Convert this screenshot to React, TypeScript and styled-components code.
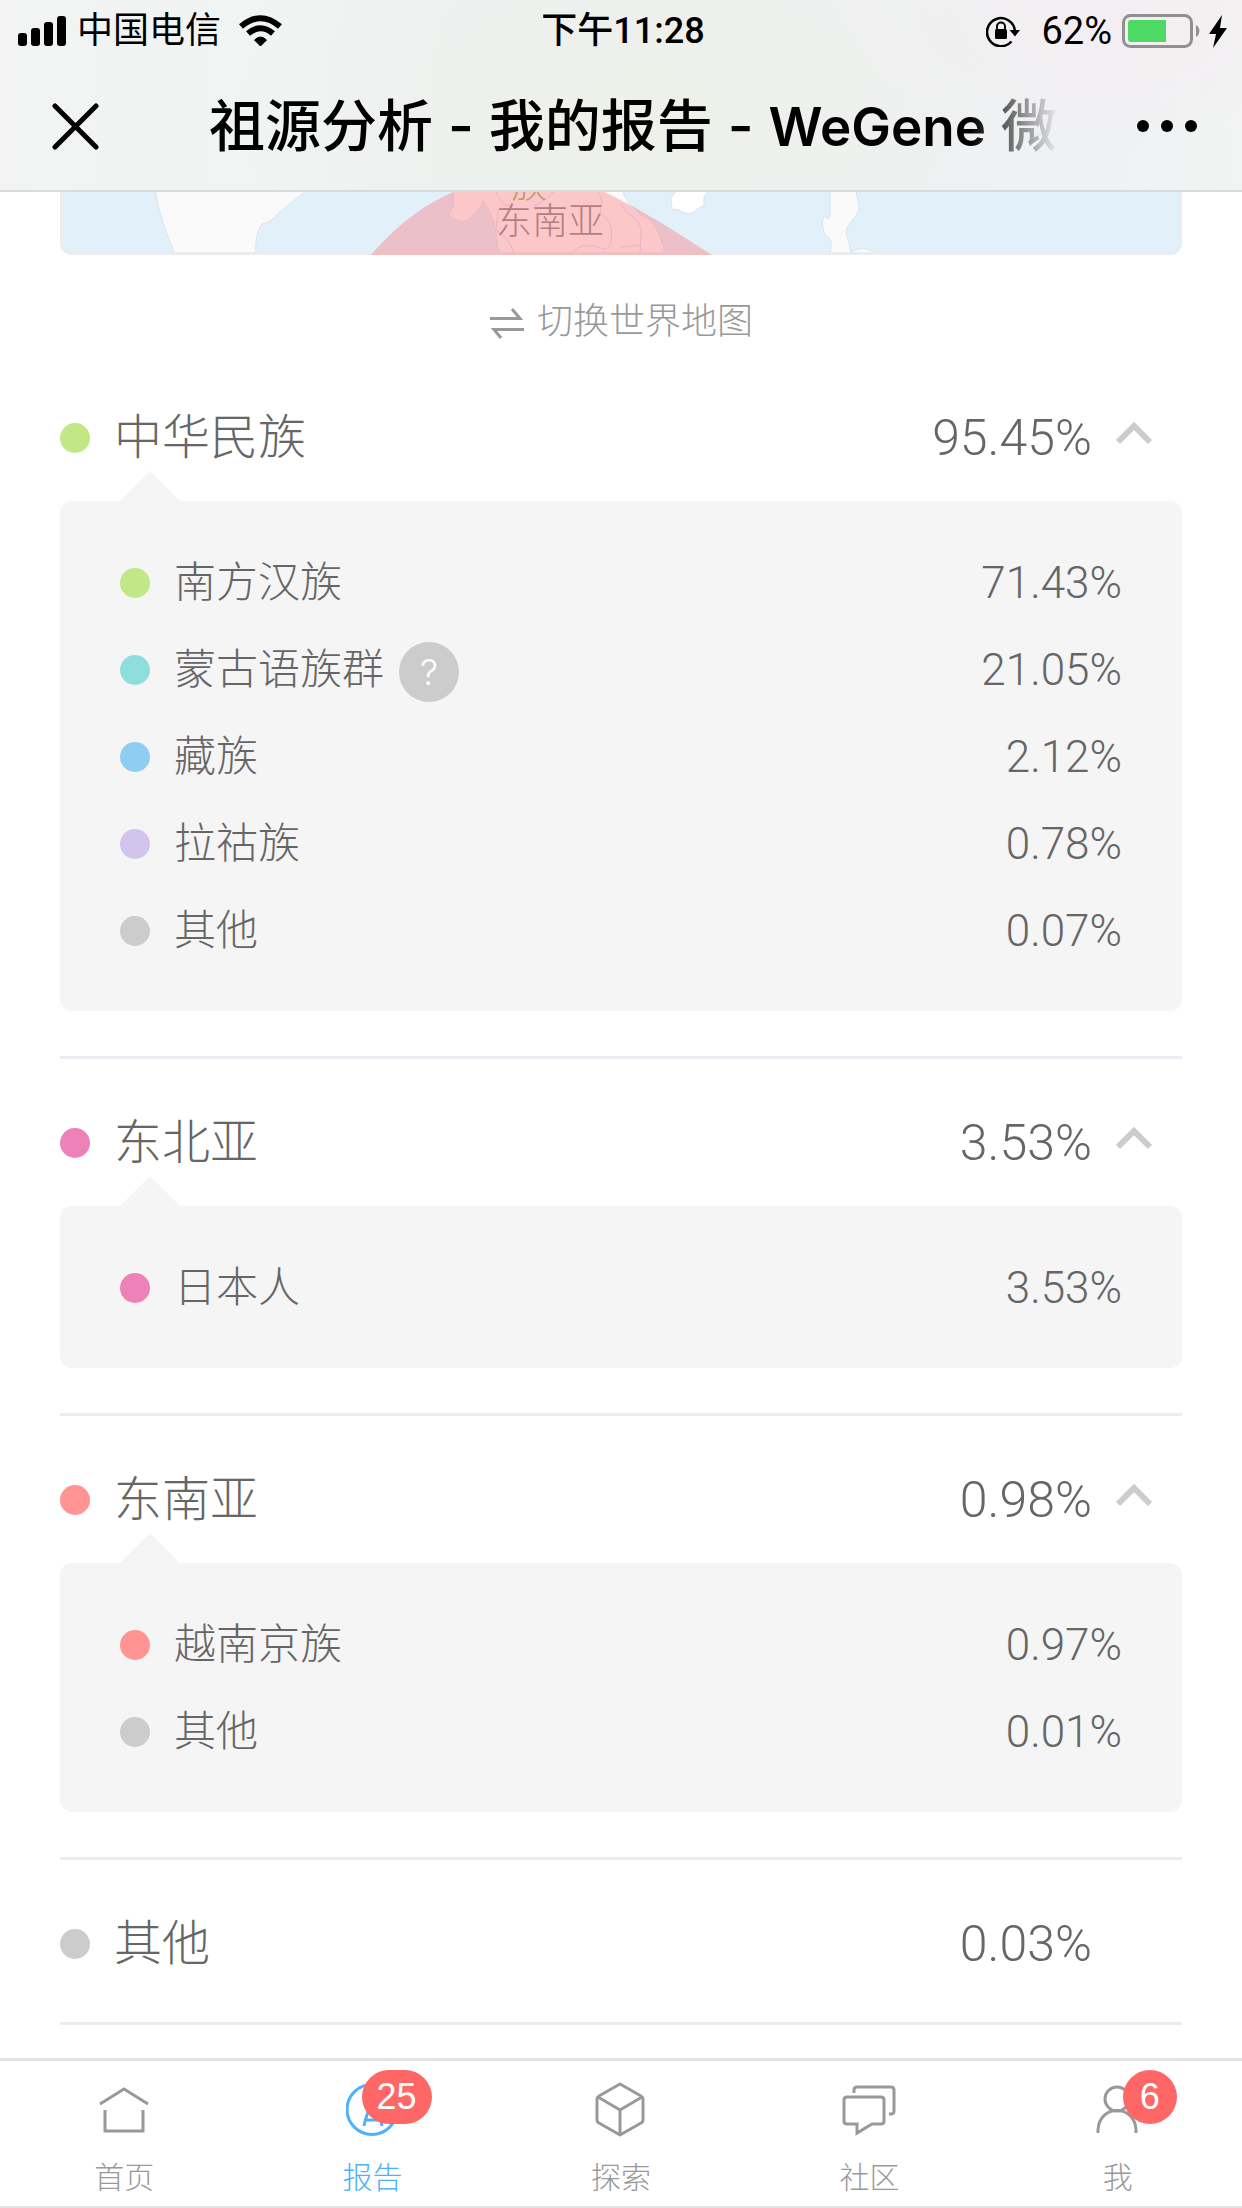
import React, { useState } from "react";
import styled, { createGlobalStyle } from "styled-components";

const CJK = '"Noto Sans CJK SC", "Noto Sans", sans-serif';
const UI = `Inter, ${CJK}`;
const STATUS = `Roboto, ${CJK}`;
const BODY = `"Liberation Sans", ${CJK}`;

const Global = createGlobalStyle`
  *, *::before, *::after { box-sizing: border-box; }
  body { margin: 0; background: #fff; font-family: ${BODY}; font-weight: 300; color: #666; }
  button { margin: 0; padding: 0; border: 0; background: none; font: inherit; color: inherit; cursor: pointer; }
  svg { display: block; flex: none; }
`;

const Shell = styled.div`
  display: flex;
  flex-direction: column;
  height: 100vh;
`;

const Header = styled.header`
  flex: none;
  color: #000;
  border-bottom: 2px solid #d8dbdb;
  font-family: ${UI};
  background:
    radial-gradient(ellipse 420px 260px at 52% 60%, #eef0e9, rgba(238, 240, 233, 0)),
    radial-gradient(ellipse 300px 130px at 89% 10%, #f4eef1, rgba(244, 238, 241, 0)),
    linear-gradient(90deg, #f3f3f3, #f0f4f3 20%, #eff1f4 40%, #eff1f4 90%, #f2f4f3);
`;

const StatusBar = styled.div`
  display: grid;
  grid-template-columns: 1fr auto 1fr;
  align-items: center;
  height: 62px;
  padding: 0 14px 0 18px;
  font-family: ${STATUS};
  font-size: 36px;
  line-height: 60px;
  font-weight: 400;
`;

const StatusSide = styled.div<{ $end?: boolean }>`
  display: flex;
  align-items: center;
  justify-content: ${(p) => (p.$end ? "flex-end" : "flex-start")};
  gap: 10px;
`;

const Carrier = styled.span`
  margin-right: 8px;
`;

const Charge = styled.span`
  margin-left: 10px;
  font-size: 38px;
`;

const Clock = styled.time`
  font-weight: 500;
`;

const NavBar = styled.div`
  display: flex;
  align-items: center;
  height: 128px;
  padding: 0 44px 0 52px;
`;

const Title = styled.h1`
  flex: 1;
  min-width: 0;
  margin: 0 76px 0 110px;
  overflow: hidden;
  white-space: nowrap;
  font-size: 56px;
  line-height: 84px;
  font-weight: 500;
  mask-image: linear-gradient(90deg, #000 calc(100% - 90px), transparent);
`;

const Brand = styled.span`
  font-size: 53px;
  font-weight: 600;
`;

const Content = styled.main`
  flex: 1;
  min-height: 0;
  overflow-y: auto;
  scrollbar-width: none;
  padding: 0 60px;
`;

const MapCard = styled.div`
  height: 63px;
  overflow: hidden;
  border-radius: 0 0 12px 12px;
  background: #e2f0f9;
`;

const MapSvg = styled.svg`
  width: 100%;
  height: 63px;
  font-size: 36px;
  font-family: ${CJK};
`;

const SwitchMap = styled.button`
  display: flex;
  align-items: center;
  gap: 12px;
  width: max-content;
  height: 120px;
  margin: 0 auto;
  padding-top: 14px;
  font-size: 36px;
  line-height: 54px;
  color: #999;
`;

const Section = styled.section<{ $short?: boolean }>`
  padding-bottom: ${(p) => (p.$short ? 15 : 45)}px;
  border-bottom: 3px solid #e9edf1;

  & + & {
    padding-top: 21px;
  }
`;

const Summary = styled.button`
  display: flex;
  align-items: center;
  width: 100%;
  height: 126px;
  padding-right: 30px;
  font-size: 48px;
  line-height: 72px;
  text-align: left;
`;

const Dot = styled.span<{ $color: string }>`
  flex: none;
  width: 30px;
  height: 30px;
  margin-right: 24px;
  border-radius: 50%;
  background: ${(p) => p.$color};
`;

const Percent = styled.span<{ $size: number }>`
  margin-left: auto;
  font-family: Roboto, sans-serif;
  font-size: ${(p) => p.$size}px;
`;

const ChevronSlot = styled.span`
  display: flex;
  width: 60px;
  padding: 0 0 10px 24px;
`;

const Panel = styled.ul`
  position: relative;
  margin: 0;
  padding: 38px 60px 37px;
  list-style: none;
  border-radius: 12px;
  background: #f5f5f5;

  &::before {
    content: "";
    position: absolute;
    left: 60px;
    bottom: 100%;
    border: 30px solid transparent;
    border-top: 0;
    border-bottom-color: #f5f5f5;
  }
`;

const Item = styled.li`
  display: flex;
  align-items: center;
  height: 87px;
  font-size: 42px;
  line-height: 64px;
`;

const Help = styled.button`
  width: 60px;
  height: 60px;
  margin: 4px 0 0 15px;
  border-radius: 50%;
  background: #ccc;
  color: #fff;
  font-family: Inter, sans-serif;
  font-size: 36px;
  line-height: 60px;
`;

const TabBar = styled.nav`
  flex: none;
  display: grid;
  grid-template-columns: repeat(5, 1fr);
  height: 150px;
  border-top: 3px solid #e1e4e6;
  border-bottom: 2px solid #e1e4e6;
  background: #fff;
`;

const Tab = styled.a<{ $active?: boolean }>`
  display: flex;
  flex-direction: column;
  align-items: center;
  padding-top: 20px;
  gap: 18px;
  font-size: 30px;
  line-height: 45px;
  text-decoration: none;
  color: ${(p) => (p.$active ? "#4db1ff" : "#999")};
`;

const IconBox = styled.span`
  position: relative;
`;

const Badge = styled.span`
  position: absolute;
  right: -32px;
  top: -11px;
  min-width: 54px;
  height: 54px;
  padding: 0 15px;
  border-radius: 27px;
  background: #f66;
  color: #fff;
  font-size: 36px;
  line-height: 54px;
  text-align: center;
`;

type Entry = { name: string; value: string; color: string; help?: boolean };
type Group = Entry & { items: Entry[] };

const groups: Group[] = [
  {
    name: "中华民族", value: "95.45%", color: "#c0e884",
    items: [
      { name: "南方汉族", value: "71.43%", color: "#c0e884" },
      { name: "蒙古语族群", value: "21.05%", color: "#8edede", help: true },
      { name: "藏族", value: "2.12%", color: "#90cdf3" },
      { name: "拉祜族", value: "0.78%", color: "#d2c5ed" },
      { name: "其他", value: "0.07%", color: "#ccc" },
    ],
  },
  {
    name: "东北亚", value: "3.53%", color: "#ee82b8",
    items: [{ name: "日本人", value: "3.53%", color: "#ee82b8" }],
  },
  {
    name: "东南亚", value: "0.98%", color: "#ff9492",
    items: [
      { name: "越南京族", value: "0.97%", color: "#ff9492" },
      { name: "其他", value: "0.01%", color: "#ccc" },
    ],
  },
  { name: "其他", value: "0.03%", color: "#ccc", items: [] },
];

const Signal = () => (
  <svg width="49" height="32" viewBox="0 0 49 32" aria-hidden="true">
    <rect x="0" y="18" width="9" height="13" rx="3" />
    <rect x="13" y="13" width="9" height="18" rx="3" />
    <rect x="26" y="7" width="9" height="24" rx="3" />
    <rect x="39" y="1" width="9" height="30" rx="3" />
  </svg>
);

const Wifi = () => (
  <svg width="43" height="32" viewBox="0 0 43 32" aria-hidden="true">
    <path d="M21.500 31 L15.500 25 Q21.500 19 27.500 25 Z" stroke="#000" strokeWidth="1" strokeLinejoin="round" />
    <path d="M9 18.500 Q21.500 8 34 18.500" fill="none" stroke="#000" strokeWidth="6" />
    <path d="M2 11.500 Q21.500 -5 41 11.500" fill="none" stroke="#000" strokeWidth="6" />
  </svg>
);

const RotationLock = () => (
  <svg width="35" height="32" viewBox="0 0 35 32" aria-hidden="true">
    <path d="M25.500 26.500 A14 14 0 1 1 29 16" fill="none" stroke="#000" strokeWidth="2.500" />
    <path d="M23.500 15 H34 L29 21.500 Z" />
    <rect x="9" y="14" width="12" height="10" rx="1.500" />
    <path d="M11 14.500 V11.500 a4 4 0 0 1 8 0 V14.500" fill="none" stroke="#000" strokeWidth="2" />
  </svg>
);

const Battery = () => (
  <svg width="106" height="36" viewBox="0 0 106 36" aria-hidden="true">
    <rect x="1.500" y="2.500" width="68" height="31" rx="7" fill="none" stroke="#909090" strokeWidth="3" />
    <path d="M9 7 H44 V29 H9 a3 3 0 0 1 -3 -3 V10 a3 3 0 0 1 3 -3Z" fill="#4cd964" />
    <path d="M74 12 a7 7 0 0 1 0 12Z" fill="#909090" />
    <path d="M100 2 L87 21 H94 L91 35 L105 15 H98Z" />
  </svg>
);

const Close = () => (
  <svg width="47" height="47" viewBox="0 0 47 47" aria-hidden="true">
    <path d="M3 3 L44 44 M44 3 L3 44" stroke="#000" strokeWidth="5" strokeLinecap="round" />
  </svg>
);

const More = () => (
  <svg width="62" height="14" viewBox="0 0 62 14" aria-hidden="true">
    <circle cx="7" cy="7" r="6" />
    <circle cx="31" cy="7" r="6" />
    <circle cx="55" cy="7" r="6" />
  </svg>
);

const Swap = () => (
  <svg width="36" height="34" viewBox="0 -2 36 34" fill="none" stroke="#999" strokeWidth="3" aria-hidden="true">
    <path d="M1 11.500 H31 L23 2" />
    <path d="M35 22.500 H5 L12 31" />
  </svg>
);

const Chevron = ({ open }: { open: boolean }) => (
  <svg width="38" height="26" viewBox="0 0 38 26" fill="none" stroke="#ccc" strokeWidth="6" aria-hidden="true">
    <path d={open ? "M2 22 L18 6 L34 22" : "M2 6 L18 22 L34 6"} />
  </svg>
);

const MapPicture = () => (
  <MapSvg viewBox="60 192 1122 63" preserveAspectRatio="xMidYMid slice" role="img" aria-label="地图">
    <g fill="#fafafa" stroke="#d3e6f4" strokeWidth="1">
      <path d="M155 190 C159 212 166 234 175 254 H256 C255 240 257 232 262 224 C272 223 278 212 286 207 L307 190Z" />
      <path d="M453 190 L453 206 L449 215 C456 223 468 224 473 215 L481 207 L483 201 L490 212 C498 230 495 242 500 254 H665 C662 238 656 220 640 214 C632 206 625 200 622 190Z" />
      <path d="M677 190 L671 198 L672 209 L679 210 C686 215 694 214 697 209 L704 205 V197 L709 190Z" fill="#fff" />
      <path d="M830 190 V214 C829 223 826 217 824 216 C821 220 823 235 827 237 C833 239 831 246 830 254 H851 C850 244 848 240 846 232 C848 220 860 216 859 207 L856 190Z" />
      <path d="M851 252 Q862 245 874 252" />
    </g>
    <path d="M61.500 190 V243 a10.500 10.500 0 0 0 10.500 10.500 H1170 a10.500 10.500 0 0 0 10.500 -10.500 V190" fill="none" stroke="#e9edf0" strokeWidth="3" />
    <path d="M371 255 C398 224 424 204 458 190 H600 C640 208 676 232 712 255Z" fill="#ff6b72" fillOpacity=".36" />
    <g fill="none" stroke="#e4b5c2" strokeWidth="1">
      <path d="M496 192 C499 200 504 206 510 206 M534 206 C543 202 547 198 554 192" />
      <path d="M498 210 L496 230 Q510 238 514 254" />
      <path d="M598 192 L602 200 L600 214 C610 218 613 228 611 240 Q612 248 604 249 L594 246 H582 Q574 250 571 254" />
      <path d="M621 203 C628 220 640 214 641 232 L640 254 M621 247 L640 245" />
    </g>
    <text x="511" y="198" fill="#bf9568">族</text>
    <text x="496" y="234" fill="#b37f7f">东南亚</text>
  </MapSvg>
);

const HomeIcon = () => (
  <svg width="54" height="56" viewBox="0 0 54 56" fill="none" stroke="currentColor" strokeWidth="3" aria-hidden="true">
    <path d="M3 23 L27 8 L51 23 M8 29 V50 H46 V29" />
  </svg>
);

const ReportIcon = () => (
  <svg width="54" height="56" viewBox="0 0 54 56" fill="none" stroke="currentColor" strokeWidth="3" aria-hidden="true">
    <circle cx="26" cy="28.500" r="25" />
    <path d="M18 45 Q19 38 27 18 Q35 38 36 45 M19 39 H35" />
  </svg>
);

const CubeIcon = () => (
  <svg width="54" height="56" viewBox="0 0 54 56" fill="none" stroke="currentColor" strokeWidth="3" strokeLinejoin="round" aria-hidden="true">
    <path d="M26 3 L47 15 Q49 16 49 18 V39 Q49 41 47 42 L26 54 L5 42 Q3 41 3 39 V18 Q3 16 5 15 Z M4 16 L26 29 L48 16 M26 29 V54" />
  </svg>
);

const ChatIcon = () => (
  <svg width="54" height="56" viewBox="0 0 54 56" fill="none" stroke="currentColor" strokeWidth="3" aria-hidden="true">
    <path d="M12 12 V9 Q12 6 15 6 H49 Q52 6 52 9 V30 Q52 33 49 33 H47" />
    <path d="M5 16 H39 Q42 16 42 19 V40 Q42 43 39 43 H30 L15 52 V43 H5 Q2 43 2 40 V19 Q2 16 5 16Z" />
  </svg>
);

const PersonIcon = () => (
  <svg width="54" height="56" viewBox="0 0 54 56" fill="none" stroke="currentColor" strokeWidth="3" aria-hidden="true">
    <circle cx="26" cy="18" r="12" />
    <path d="M7 52 V49 C8 23 44 23 45 49 V52" />
  </svg>
);

const tabs = [
  { label: "首页", Icon: HomeIcon },
  { label: "报告", Icon: ReportIcon, badge: "25", active: true },
  { label: "探索", Icon: CubeIcon },
  { label: "社区", Icon: ChatIcon },
  { label: "我", Icon: PersonIcon, badge: "6" },
];

function AncestryGroup({ group }: { group: Group }) {
  const [open, setOpen] = useState(true);
  const hasItems = group.items.length > 0;
  return (
    <Section $short={!hasItems}>
      <Summary aria-expanded={hasItems ? open : undefined} onClick={() => setOpen(!open)}>
        <Dot $color={group.color} />
        {group.name}
        <Percent $size={50}>{group.value}</Percent>
        <ChevronSlot>{hasItems && <Chevron open={open} />}</ChevronSlot>
      </Summary>
      {hasItems && open && (
        <Panel>
          {group.items.map((item) => (
            <Item key={item.name}>
              <Dot $color={item.color} />
              {item.name}
              {item.help && <Help>?</Help>}
              <Percent $size={44}>{item.value}</Percent>
            </Item>
          ))}
        </Panel>
      )}
    </Section>
  );
}

export default function App() {
  return (
    <Shell>
      <Global />
      <Header>
        <StatusBar>
          <StatusSide>
            <Signal />
            <Carrier>中国电信</Carrier>
            <Wifi />
          </StatusSide>
          <Clock>下午11:28</Clock>
          <StatusSide $end>
            <RotationLock />
            <Charge>62%</Charge>
            <Battery />
          </StatusSide>
        </StatusBar>
        <NavBar>
          <button aria-label="关闭"><Close /></button>
          <Title>祖源分析 - 我的报告 - <Brand>WeGene</Brand> 微基因</Title>
          <button aria-label="更多"><More /></button>
        </NavBar>
      </Header>
      <Content>
        <MapCard><MapPicture /></MapCard>
        <SwitchMap>
          <Swap />
          切换世界地图
        </SwitchMap>
        {groups.map((group) => (
          <AncestryGroup key={group.name} group={group} />
        ))}
      </Content>
      <TabBar>
        {tabs.map(({ label, Icon, badge, active }) => (
          <Tab key={label} href="#" $active={active}>
            <IconBox>
              <Icon />
              {badge && <Badge>{badge}</Badge>}
            </IconBox>
            {label}
          </Tab>
        ))}
      </TabBar>
    </Shell>
  );
}
